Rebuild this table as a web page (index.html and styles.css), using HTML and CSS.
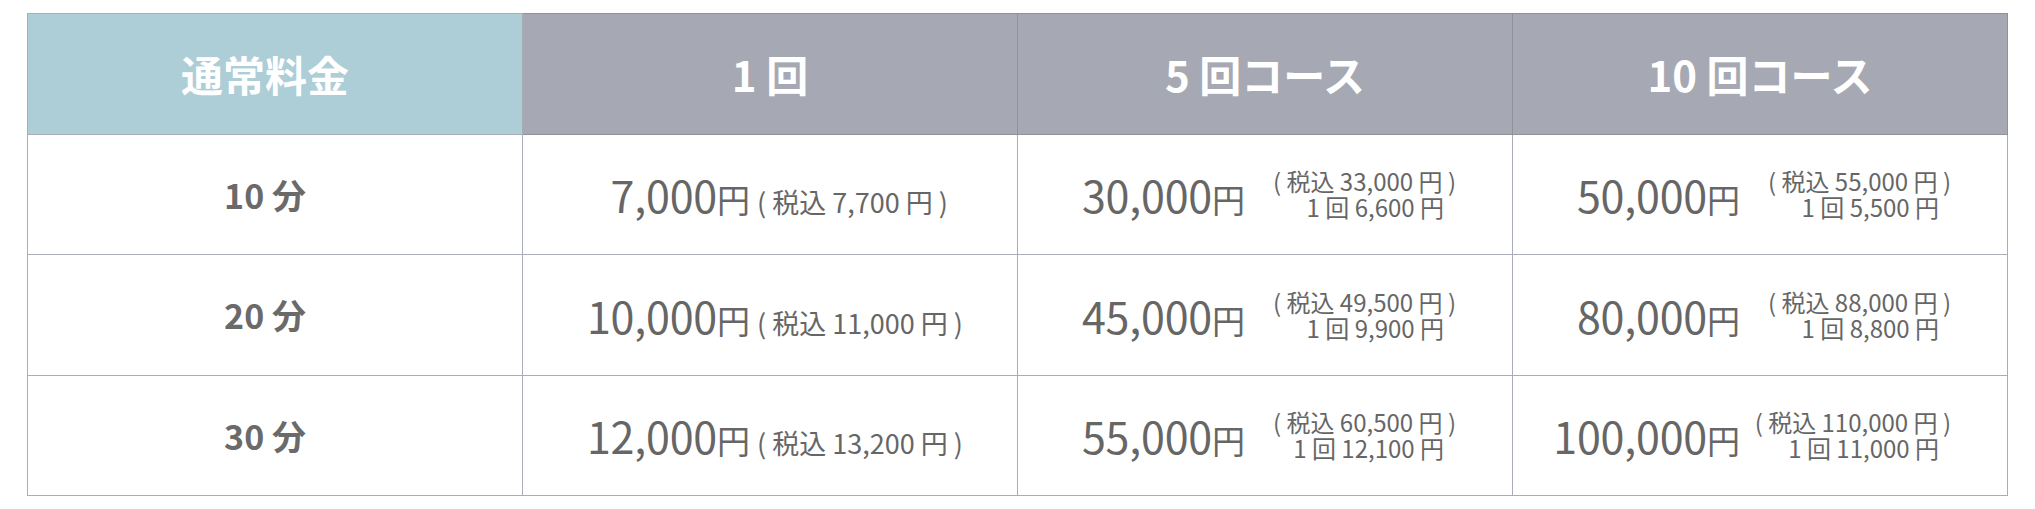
FILE: index.html
```html
<!DOCTYPE html>
<html lang="ja">
<head>
<meta charset="utf-8">
<title>料金表</title>
<link rel="stylesheet" href="styles.css">
</head>
<body>
<table class="price-table">
  <thead>
    <tr>
      <th class="head-main">通常料金</th>
      <th class="head-col">1 回</th>
      <th class="head-col">5 回コース</th>
      <th class="head-col">10 回コース</th>
    </tr>
  </thead>
  <tbody>
    <tr>
      <th class="label">10 分</th>
      <td><div class="single"><div class="price"><span class="num">7,000</span><span class="yen">円</span></div><span class="tax">( 税込 7,700 円 )</span></div></td>
      <td><div class="course"><div class="price"><span class="num">30,000</span><span class="yen">円</span></div><div class="sub"><span class="line">( 税込 33,000 円 )</span><span class="line per">1 回 6,600 円</span></div></div></td>
      <td><div class="course"><div class="price"><span class="num">50,000</span><span class="yen">円</span></div><div class="sub"><span class="line">( 税込 55,000 円 )</span><span class="line per">1 回 5,500 円</span></div></div></td>
    </tr>
    <tr>
      <th class="label">20 分</th>
      <td><div class="single"><div class="price"><span class="num">10,000</span><span class="yen">円</span></div><span class="tax">( 税込 11,000 円 )</span></div></td>
      <td><div class="course"><div class="price"><span class="num">45,000</span><span class="yen">円</span></div><div class="sub"><span class="line">( 税込 49,500 円 )</span><span class="line per">1 回 9,900 円</span></div></div></td>
      <td><div class="course"><div class="price"><span class="num">80,000</span><span class="yen">円</span></div><div class="sub"><span class="line">( 税込 88,000 円 )</span><span class="line per">1 回 8,800 円</span></div></div></td>
    </tr>
    <tr>
      <th class="label">30 分</th>
      <td><div class="single"><div class="price"><span class="num">12,000</span><span class="yen">円</span></div><span class="tax">( 税込 13,200 円 )</span></div></td>
      <td><div class="course"><div class="price"><span class="num">55,000</span><span class="yen">円</span></div><div class="sub"><span class="line">( 税込 60,500 円 )</span><span class="line per">1 回 12,100 円</span></div></div></td>
      <td><div class="course"><div class="price"><span class="num">100,000</span><span class="yen">円</span></div><div class="sub"><span class="line">( 税込 110,000 円 )</span><span class="line per">1 回 11,000 円</span></div></div></td>
    </tr>
  </tbody>
</table>
</body>
</html>
```
FILE: styles.css
```css
html, body {
  margin: 0;
  padding: 0;
  background: #ffffff;
}

body {
  padding: 13px 27px 0;
  font-family: "Noto Sans CJK JP", "Noto Sans", sans-serif;
  color: #666666;
}

.price-table {
  width: 1981px;
  border-collapse: collapse;
  table-layout: fixed;
}

.price-table th,
.price-table td {
  border: 1px solid #a9adb7;
  height: 119.5px;
  padding: 0;
  text-align: center;
  vertical-align: middle;
}

.head-main {
  background: #adcdd7;
  color: #ffffff;
  font-size: 42px;
  font-weight: 700;
  padding-right: 20px !important;
}

.head-col {
  background: #a6a9b3;
  color: #ffffff;
  font-size: 42px;
  font-weight: 700;
  border-color: #8f9299 !important;
}

.label {
  font-size: 34px;
  font-weight: 700;
  color: #6a6a6a;
  padding-right: 20px !important;
}

.single,
.course {
  display: grid;
  grid-template-columns: 227px 1fr;
  align-items: center;
  text-align: left;
}

.single {
  align-items: baseline;
}

.course {
  grid-template-columns: 227px 211px;
}

.price {
  justify-self: end;
  display: flex;
  align-items: baseline;
}

.num {
  font-size: 43px;
  font-weight: 400;
  letter-spacing: -0.2px;
}

.yen {
  font-size: 33px;
}

.tax {
  justify-self: start;
  font-size: 27px;
  margin-left: 7px;
}

.sub {
  justify-self: end;
  display: flex;
  flex-direction: column;
  align-items: flex-end;
  font-size: 24px;
  line-height: 26px;
}

.per {
  padding-right: 12px;
}
```
